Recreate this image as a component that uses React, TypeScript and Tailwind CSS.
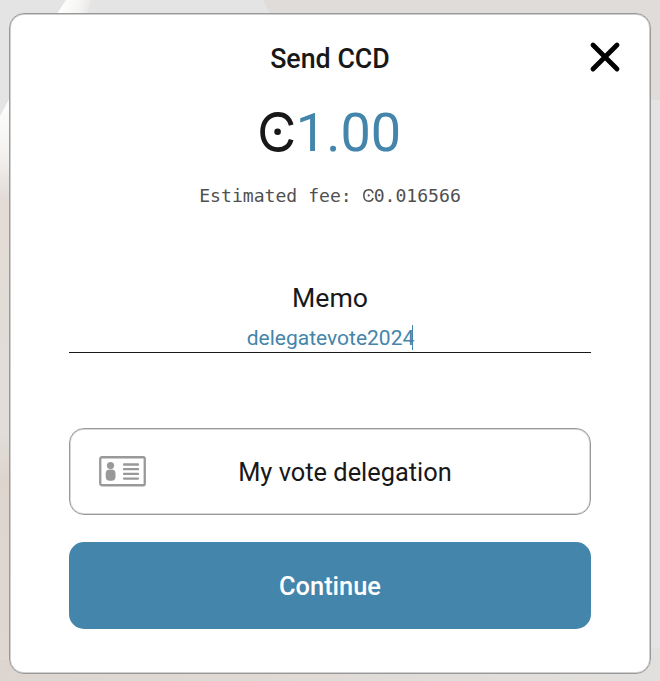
function CcdMark({ className, weight, dot }: { className: string; weight: number; dot: number }) {
  return (
    <svg className={className} viewBox="0 0 34 40" fill="none" role="img" aria-label="CCD">
      <path
        d="M31.2 13.2C29.4 6.2 25 2.4 18 2.4C8.7 2.4 2.6 9.5 2.6 20C2.6 30.5 8.7 37.6 18 37.6C25 37.6 29.4 33.8 31.2 27.6"
        stroke="currentColor"
        strokeWidth={weight}
      />
      <circle cx="17.6" cy="19.8" r={dot} fill="currentColor" />
    </svg>
  );
}

export default function App() {
  return (
    <div className="relative h-[681px] w-[660px] overflow-hidden bg-[#e4e4e4] pt-[13px] pl-[9px] font-['Roboto','Liberation_Sans',sans-serif] text-[#181818]">
      <svg className="absolute inset-0" width="660" height="681" viewBox="0 0 660 681" aria-hidden="true">
        <defs>
          <linearGradient id="leftEdge" x1="0" y1="95" x2="0" y2="681" gradientUnits="userSpaceOnUse">
            <stop offset="0" stopColor="#ffffff" />
            <stop offset=".09" stopColor="#f6f4f2" />
            <stop offset=".18" stopColor="#e2dbd6" />
            <stop offset=".58" stopColor="#e2ddd9" />
            <stop offset=".66" stopColor="#ddd4ce" />
            <stop offset="1" stopColor="#dfd8d3" />
          </linearGradient>
          <linearGradient id="bottomEdge" x1="0" y1="0" x2="660" y2="0" gradientUnits="userSpaceOnUse">
            <stop offset="0" stopColor="#ddd5cf" />
            <stop offset="1" stopColor="#e2e0de" />
          </linearGradient>
          <linearGradient id="topBeam" x1="60" y1="0" x2="92" y2="8" gradientUnits="userSpaceOnUse">
            <stop offset="0" stopColor="#ffffff" />
            <stop offset=".6" stopColor="#f6f5f4" />
            <stop offset="1" stopColor="#e6e5e4" />
          </linearGradient>
        </defs>
        <path d="M66 0H91L86 20H53Z" fill="url(#topBeam)" />
        <path d="M263 0H660V100H270V14Z" fill="#dfdcd9" />
        <path d="M645 100H660V648L645 640Z" fill="#e4e4e4" />
        <path d="M0 116L12 94V681H0Z" fill="url(#leftEdge)" />
        <path d="M0 660H640V648H660V681H0Z" fill="url(#bottomEdge)" />
      </svg>
      <main className="relative h-[661px] w-[642px] rounded-[15px] border border-[#999] bg-white px-[59px] shadow-[inset_0_0_0_1px_#cfcfcf]">
        <h1 className="pt-[30px] text-center text-[26.8px] leading-[31px] font-medium">Send CCD</h1>
        <button aria-label="Close" className="absolute top-[27px] right-[29px]">
          <svg width="32" height="32" viewBox="0 0 32 32" fill="none" stroke="#000" strokeWidth="4.8" strokeLinecap="round">
            <path d="M4 4L28 28M28 4L4 28" />
          </svg>
        </button>
        <div className="mt-[26px] flex h-[63px] items-center justify-center pl-px text-[54px] leading-[63px]">
          <CcdMark className="mr-[2px] mb-[2px] h-10 w-[34px]" weight={4.7} dot={3.3} />
          <span className="text-[#4485ab]">1.00</span>
        </div>
        <p className="mt-[19px] text-center font-['DejaVu_Sans_Mono',monospace] text-[18.1px] leading-[26px] text-[#505050]">
          Estimated fee: <CcdMark className="inline-block h-[13px] w-[11px] align-[0px]" weight={4.6} dot={3.4} />0.016566
        </p>
        <label className="mt-[74px] block text-center text-[26.67px] leading-[31px]">Memo</label>
        <div className="mt-[9px] flex h-[30px] items-center justify-center border-b border-[#181818] text-[21px] leading-[25px] text-[#4485ab]">
          <span className="pt-[2px]">delegatevote2024</span>
          <span className="-ml-[2px] h-[25px] w-px bg-[#4485ab]" />
        </div>
        <div className="mt-[75px] flex h-[87px] items-center rounded-[15px] border border-[#999] px-[29px] shadow-[inset_0_0_0_1px_#d8d8d8]">
          <svg width="48" height="31" viewBox="0 0 48 31" fill="none" stroke="#999">
            <rect x="1.25" y="1.25" width="44.5" height="28" rx="1.5" strokeWidth="2.3" />
            <g fill="#999" stroke="none">
              <circle cx="11.5" cy="9.5" r="3.6" />
              <rect x="6.7" y="13.4" width="9.8" height="11.3" rx="4" />
            </g>
            <path d="M25 8.5H39M25 13.2H39M25 17.9H39M25 22.6H39" strokeWidth="2.3" strokeLinecap="round" />
          </svg>
          <span className="mr-[18px] flex-1 pt-[2px] text-center text-[25.4px] leading-[31px]">My vote delegation</span>
        </div>
        <button className="mt-[27px] h-[87px] w-full rounded-[15px] bg-[#4485ab] pt-[2px] text-[25.4px] leading-[31px] font-medium text-white">
          Continue
        </button>
      </main>
    </div>
  );
}
